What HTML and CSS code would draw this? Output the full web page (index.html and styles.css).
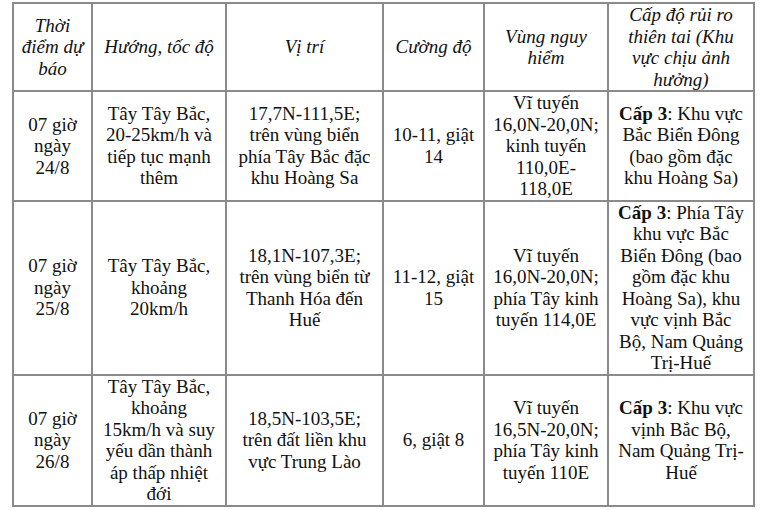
FILE: index.html
```html
<!DOCTYPE html>
<html lang="vi">
<head>
<meta charset="utf-8">
<link rel="stylesheet" href="styles.css">
</head>
<body>
<table class="forecast">
  <colgroup>
    <col class="c1"><col class="c2"><col class="c3"><col class="c4"><col class="c5"><col class="c6">
  </colgroup>
  <thead>
    <tr>
      <th class="first">Thời điểm dự báo</th>
      <th>Hướng, tốc độ</th>
      <th class="wide">Vị trí</th>
      <th>Cường độ</th>
      <th>Vùng nguy hiểm</th>
      <th>Cấp độ rủi ro thiên tai (Khu vực chịu ảnh hưởng)</th>
    </tr>
  </thead>
  <tbody>
    <tr>
      <td>07 giờ ngày 24/8</td>
      <td>Tây Tây Bắc, 20-25km/h và tiếp tục mạnh thêm</td>
      <td class="wide">17,7N-111,5E; trên vùng biển phía Tây Bắc đặc khu Hoàng Sa</td>
      <td>10-11, giật 14</td>
      <td>Vĩ tuyến 16,0N-20,0N; kinh tuyến 110,0E-118,0E</td>
      <td><b>Cấp 3</b>: Khu vực Bắc Biển Đông (bao gồm đặc khu Hoàng Sa)</td>
    </tr>
    <tr>
      <td>07 giờ ngày 25/8</td>
      <td>Tây Tây Bắc, khoảng 20km/h</td>
      <td class="wide">18,1N-107,3E; trên vùng biển từ Thanh Hóa đến Huế</td>
      <td>11-12, giật 15</td>
      <td>Vĩ tuyến 16,0N-20,0N; phía Tây kinh tuyến 114,0E</td>
      <td><b>Cấp 3</b>: Phía Tây khu vực Bắc Biển Đông (bao gồm đặc khu Hoàng Sa), khu vực vịnh Bắc Bộ, Nam Quảng Trị-Huế</td>
    </tr>
    <tr>
      <td>07 giờ ngày 26/8</td>
      <td>Tây Tây Bắc, khoảng 15km/h và suy yếu dần thành áp thấp nhiệt đới</td>
      <td class="wide">18,5N-103,5E; trên đất liền khu vực Trung Lào</td>
      <td>6, giật 8</td>
      <td>Vĩ tuyến 16,5N-20,0N; phía Tây kinh tuyến 110E</td>
      <td><b>Cấp 3</b>: Khu vực vịnh Bắc Bộ, Nam Quảng Trị-Huế</td>
    </tr>
  </tbody>
</table>
</body>
</html>
```
FILE: styles.css
```css
html, body {
  margin: 0;
  padding: 0;
  background: #ffffff;
}

body {
  padding: 2px 0 0 12px;
  font-family: "Liberation Serif", "Times New Roman", serif;
  font-size: 19px;
  color: #111111;
}

.forecast {
  border-collapse: collapse;
  table-layout: fixed;
  width: 741px;
}

.c1 { width: 79px; }
.c2 { width: 134px; }
.c3 { width: 157px; }
.c4 { width: 101px; }
.c5 { width: 124px; }
.c6 { width: 146px; }

.forecast th,
.forecast td {
  border: 2px solid #8a8a8a;
  padding: 0 8px;
  text-align: center;
  vertical-align: middle;
  line-height: 21.5px;
  font-size: 19px;
}

.forecast th.wide,
.forecast td.wide {
  padding: 0 6px;
}

.forecast th.first {
  padding: 0 4px;
}

.forecast th {
  font-weight: normal;
  font-style: italic;
}

.forecast b {
  font-weight: bold;
}
```
